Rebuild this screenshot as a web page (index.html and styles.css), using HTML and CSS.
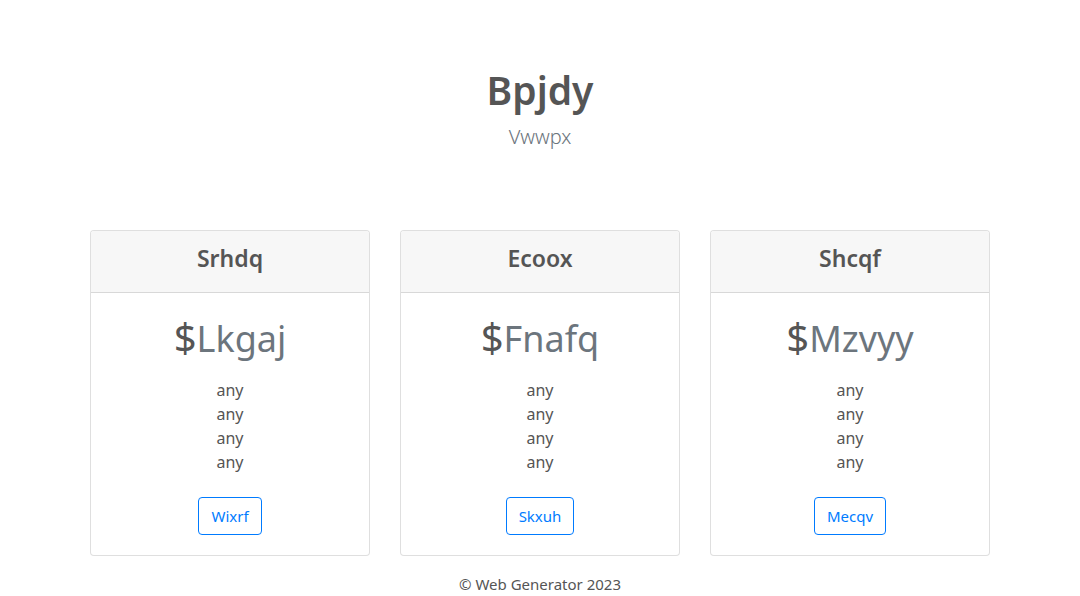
FILE: index.html
```html
<!DOCTYPE html>
<html lang="en">
<head>
<meta charset="utf-8">
<title>Bpjdy</title>
<link rel="stylesheet" href="styles.css">
</head>
<body>
<header class="hero">
  <h1 class="hero-title">Bpjdy</h1>
  <p class="hero-lead">Vwwpx</p>
</header>
<main class="deck">
  <div class="card">
    <div class="card-header"><h4>Srhdq</h4></div>
    <div class="card-body">
      <h1 class="price">$<span class="muted">Lkgaj</span></h1>
      <ul class="features"><li>any</li><li>any</li><li>any</li><li>any</li></ul>
      <button class="btn">Wixrf</button>
    </div>
  </div>
  <div class="card">
    <div class="card-header"><h4>Ecoox</h4></div>
    <div class="card-body">
      <h1 class="price">$<span class="muted">Fnafq</span></h1>
      <ul class="features"><li>any</li><li>any</li><li>any</li><li>any</li></ul>
      <button class="btn">Skxuh</button>
    </div>
  </div>
  <div class="card">
    <div class="card-header"><h4>Shcqf</h4></div>
    <div class="card-body">
      <h1 class="price">$<span class="muted">Mzvyy</span></h1>
      <ul class="features"><li>any</li><li>any</li><li>any</li><li>any</li></ul>
      <button class="btn">Mecqv</button>
    </div>
  </div>
</main>
<footer class="footer">© Web Generator 2023</footer>
</body>
</html>
```

FILE: styles.css
```css
* { box-sizing: border-box; }
html, body { margin: 0; padding: 0; }
body {
  font-family: "Noto Sans", "Open Sans", sans-serif;
  font-size: 16px;
  line-height: 1.5;
  color: #555;
  background: #fff;
}
.hero {
  text-align: center;
  padding-top: 66px;
}
.hero-title {
  margin: 0 0 8px;
  font-size: 39px;
  font-weight: 600;
  line-height: 48px;
  color: #555;
}
.hero-lead {
  margin: 0;
  font-size: 20px;
  font-weight: 300;
  line-height: 30px;
  color: #6c757d;
}
.deck {
  display: flex;
  justify-content: center;
  gap: 30px;
  margin-top: 78px;
}
.card {
  width: 280px;
  border: 1px solid rgba(0,0,0,.125);
  border-radius: 4px;
  background: #fff;
  text-align: center;
  overflow: hidden;
}
.card-header {
  background: #f7f7f7;
  border-bottom: 1px solid rgba(0,0,0,.125);
  height: 62px;
  padding-bottom: 5px;
  display: flex;
  align-items: center;
  justify-content: center;
}
.card-header h4 {
  margin: 0;
  font-size: 23px;
  font-weight: 600;
  line-height: 1.2;
}
.card-body {
  padding: 20px 20px 20px;
}
.price {
  margin: 0 0 15px;
  font-size: 40px;
  font-weight: 400;
  line-height: 48px;
  color: #555;
}
.muted { color: #6c757d; font-size: 36px; }
.features {
  list-style: none;
  margin: 0 0 23px;
  padding: 0;
}
.features li { line-height: 24px; }
.btn {
  font-family: inherit;
  font-size: 15px;
  line-height: 24px;
  padding: 6px 12px;
  color: #007bff;
  background: transparent;
  border: 1px solid #007bff;
  border-radius: 4px;
}
.footer {
  text-align: center;
  margin-top: 16px;
  line-height: 24px;
  font-size: 15px;
  color: #555;
}
```
